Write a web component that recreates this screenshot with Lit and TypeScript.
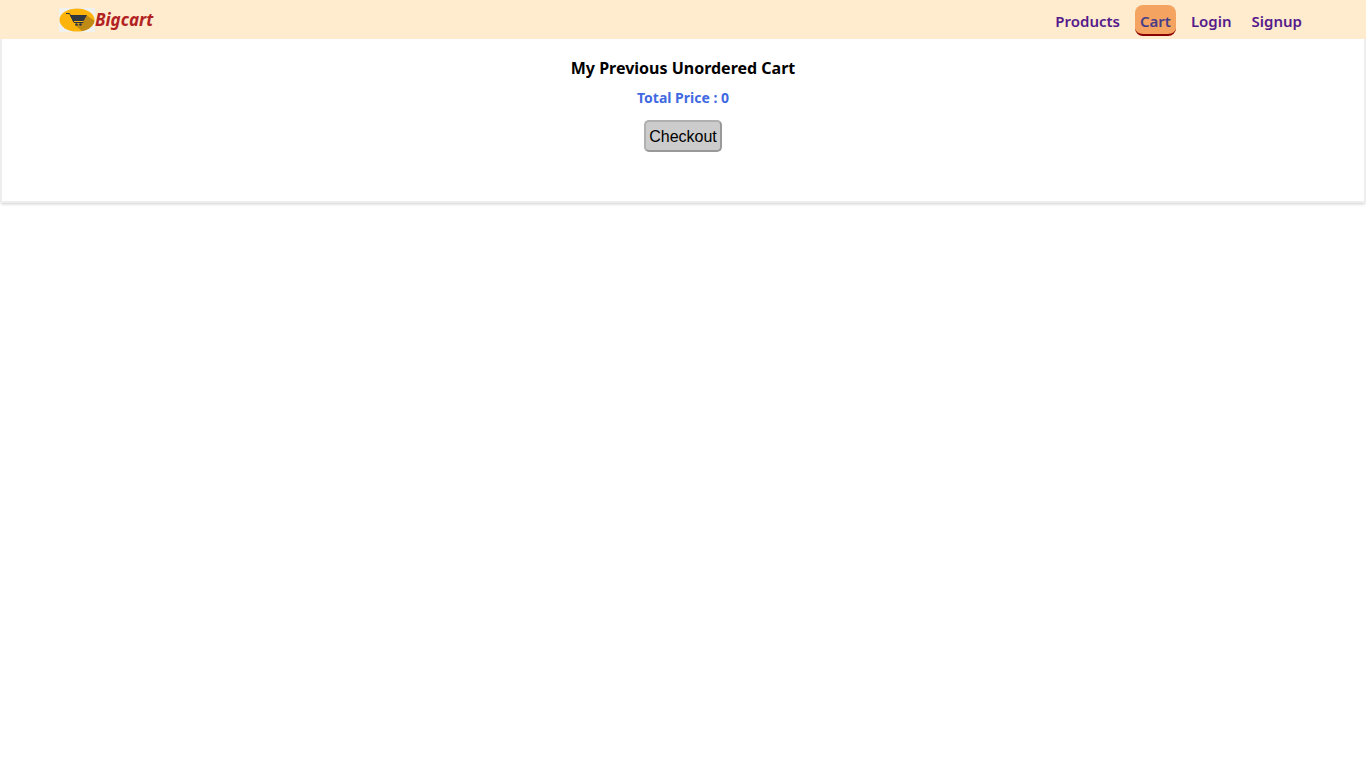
import { LitElement, html, css, svg } from "lit";
import { customElement, state } from "lit/decorators.js";

const logo = svg`
  <svg class="logo" viewBox="0 0 36 24" aria-hidden="true">
    <rect width="36" height="24" fill="#f1f1ef" />
    <clipPath id="disc"><ellipse cx="18" cy="12" rx="17.5" ry="11.5" /></clipPath>
    <g clip-path="url(#disc)">
      <rect width="36" height="24" fill="#fcb30b" />
      <path d="M27 7 L36 13 V24 H24 L16 17 L24 14Z" fill="#c08a16" />
      <path d="M7 5.500 H10.500 L15 14.500 H24.500" fill="none" stroke="#2c3440" stroke-width="1" />
      <path d="M11 7 H28 L24.500 13 H14Z" fill="#2c3440" />
      <path d="M13 9 H27 M14 11 H26" stroke="#4c4d42" stroke-width="0.400" />
      <circle cx="17.500" cy="16.500" r="1.300" fill="#2c3440" />
      <circle cx="21.500" cy="16.500" r="1.300" fill="#2c3440" />
    </g>
  </svg>`;

@customElement("app-root")
export class AppRoot extends LitElement {
  static styles = css`
    :host {
      display: block;
      min-height: 100vh;
      font-family: "Segoe UI", "Noto Sans", sans-serif;
    }
    .bar {
      display: flex;
      justify-content: space-between;
      align-items: flex-start;
      padding: 0 59px 3px;
      background: #ffebcd;
    }
    .brand {
      display: flex;
      align-items: center;
      padding-top: 8px;
      line-height: 24px;
      font-size: 17px;
      font-weight: 700;
      font-style: italic;
      color: #b22222;
      text-decoration: none;
    }
    .logo {
      width: 36px;
      height: 24px;
    }
    .links {
      display: flex;
      gap: 10px;
      padding-top: 5px;
    }
    .link {
      padding: 5px 5px 1px;
      border-bottom: 2px solid transparent;
      border-radius: 8px;
      font-size: 15px;
      line-height: 23px;
      font-weight: 600;
      color: #551a8b;
      text-decoration: none;
    }
    .link.active {
      background: #f4a460;
      border-bottom-color: #8b0000;
      color: #483d8b;
    }
    .cart {
      display: flex;
      flex-direction: column;
      align-items: center;
      padding: 16px 0 49px;
      border: 2px solid #eee;
      border-top: 0;
      box-shadow: 0 2px 3px -1px rgba(0, 0, 0, 0.2);
    }
    .title {
      margin: 0;
      font-size: 16px;
      line-height: 26px;
      font-weight: 700;
      color: #000;
    }
    .total {
      margin: 7px 0 12px;
      font-size: 14px;
      line-height: 20px;
      font-weight: 700;
      color: #4169e1;
    }
    .checkout {
      padding: 5px 3px 3px;
      border: 2px solid;
      border-color: #b0b0b0 #999 #999 #b0b0b0;
      border-radius: 5px;
      background: #ccc;
      font-family: "Liberation Sans", Arial, sans-serif;
      font-size: 16px;
      line-height: 20px;
      color: #000;
    }
  `;

  @state() private current = "Cart";
  @state() private total = 0;

  render() {
    return html`
      <header class="bar">
        <a class="brand" href="#">${logo}<span>Bigcart</span></a>
        <nav class="links">
          ${["Products", "Cart", "Login", "Signup"].map(
            (name) => html`<a
              class="link ${name === this.current ? "active" : ""}"
              href="#${name.toLowerCase()}"
              @click=${() => (this.current = name)}
              >${name}</a
            >`
          )}
        </nav>
      </header>
      <main class="cart">
        <h1 class="title">My Previous Unordered Cart</h1>
        <p class="total">Total Price : ${this.total}</p>
        <button class="checkout" type="button">Checkout</button>
      </main>
    `;
  }
}
